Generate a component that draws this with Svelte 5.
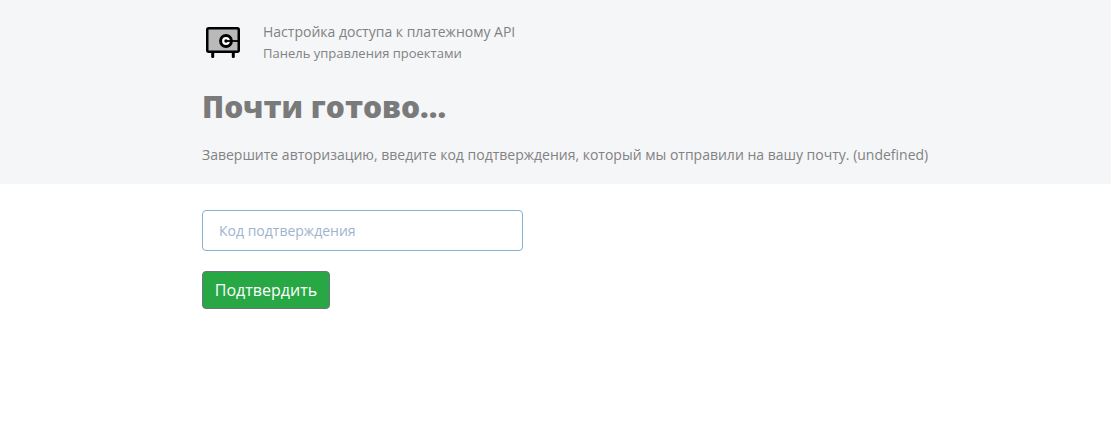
<script lang="ts">
	let code = $state('');
</script>

<section class="head">
	<div class="container">
		<div class="brand">
			<svg class="logo" width="40" height="40" viewBox="0 0 40 40" aria-hidden="true">
				<rect x="9.2" y="28" width="3" height="7" rx="1.2" fill="#000" />
				<rect x="29.8" y="28" width="3" height="7" rx="1.2" fill="#000" />
				<rect x="5.25" y="5.25" width="31.5" height="23.5" rx="1.5" fill="#b9b9b9" stroke="#000" stroke-width="2.5" />
				<circle cx="24" cy="18" r="5.4" fill="#fff" stroke="#000" stroke-width="3" />
				<circle cx="24" cy="18" r="1.7" fill="#000" />
				<path d="M24 18h13" stroke="#000" stroke-width="1.8" />
			</svg>
			<div class="brand-text">
				<p class="title">Настройка доступа к платежному API</p>
				<p class="sub">Панель управления проектами</p>
			</div>
		</div>
		<h1>Почти готово...</h1>
		<p class="lead">Завершите авторизацию, введите код подтверждения, который мы отправили на вашу почту. (undefined)</p>
	</div>
</section>

<section class="form">
	<div class="container">
		<input type="text" placeholder="Код подтверждения" bind:value={code} />
		<button type="button">Подтвердить</button>
	</div>
</section>

<style>
	:global(body) {
		background: #fff;
		font-family: "Open Sans", sans-serif;
	}
	.container {
		width: 740px;
		margin-left: 202px;
	}
	.head {
		background: #f5f6f8;
		height: 184px;
		box-sizing: border-box;
		padding-top: 20px;
	}
	.brand {
		display: flex;
		align-items: flex-start;
		gap: 21px;
	}
	.logo {
		flex: none;
		margin-top: 3px;
	}
	.brand-text p {
		margin: 0;
		color: #828282;
	}
	.title {
		font-size: 14px;
		line-height: 24px;
	}
	.sub {
		font-size: 13px;
		line-height: 18px;
	}
	h1 {
		margin: 25px 0 0;
		font-size: 30px;
		line-height: 38px;
		font-weight: 800;
		color: #7a7a7a;
	}
	.lead {
		margin: 19px 0 0;
		font-size: 14px;
		line-height: 20px;
		color: #828282;
		white-space: nowrap;
	}
	.form .container {
		display: flex;
		flex-direction: column;
		align-items: flex-start;
		gap: 20px;
		padding-top: 26px;
	}
	input {
		width: 321px;
		height: 41px;
		box-sizing: border-box;
		padding: 0 16px;
		border: 1px solid #86b0cb;
		border-radius: 4px;
		outline: none;
		font: 14px "Open Sans", sans-serif;
		color: #495057;
	}
	input::placeholder {
		color: #9db4cc;
		opacity: 1;
	}
	button {
		width: 128px;
		height: 38px;
		box-sizing: border-box;
		padding: 0;
		background: #28a745;
		border: 1px solid #6c757d;
		border-radius: 4px;
		color: #fff;
		font: 16px "Open Sans", sans-serif;
	}
</style>
